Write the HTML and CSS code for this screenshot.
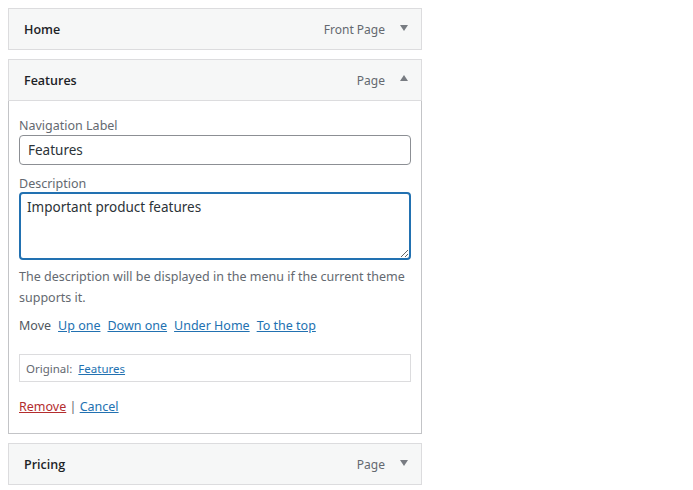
FILE: index.html
```html
<!DOCTYPE html>
<html lang="en">
<head>
    <meta charset="UTF-8">
    <meta name="viewport" content="width=device-width, initial-scale=1.0">
    <title>Menu structure</title>
    <link rel="stylesheet" href="styles.css">
</head>
<body>
<ul class="menu">
    <li class="menu-item">
        <div class="item-handle">
            <span class="item-title">Home</span>
            <span class="item-controls">
                <span class="item-type">Front Page</span>
                <span class="item-toggle down"></span>
            </span>
        </div>
    </li>
    <li class="menu-item active">
        <div class="item-handle">
            <span class="item-title">Features</span>
            <span class="item-controls">
                <span class="item-type">Page</span>
                <span class="item-toggle up"></span>
            </span>
        </div>
        <div class="item-settings">
            <label class="field-label" for="edit-title">Navigation Label</label>
            <input type="text" id="edit-title" class="field-input" value="Features">

            <label class="field-label desc-label" for="edit-desc">Description</label>
            <textarea id="edit-desc" class="field-textarea">Important product features</textarea>
            <p class="description">The description will be displayed in the menu if the current theme supports it.</p>

            <div class="move-links">
                <span class="move-text">Move</span>
                <a href="#">Up one</a>
                <a href="#">Down one</a>
                <a href="#">Under Home</a>
                <a href="#">To the top</a>
            </div>

            <div class="original">
                Original: <a href="#">Features</a>
            </div>

            <div class="actions">
                <a href="#" class="remove">Remove</a> <span class="sep">|</span> <a href="#">Cancel</a>
            </div>
        </div>
    </li>
    <li class="menu-item">
        <div class="item-handle">
            <span class="item-title">Pricing</span>
            <span class="item-controls">
                <span class="item-type">Page</span>
                <span class="item-toggle down"></span>
            </span>
        </div>
    </li>
</ul>
</body>
</html>
```

FILE: styles.css
```css
body {
    margin: 8px;
    background-color: #ffffff;
    font-family: "Noto Sans", "Open Sans", sans-serif;
    font-size: 13px;
    color: #3c434a;
}

.menu {
    list-style: none;
    margin: 0;
    padding: 0;
    width: 414px;
    display: flex;
    flex-direction: column;
    gap: 9px;
}

.item-handle {
    height: 40px;
    border: 1px solid #dcdcde;
    background-color: #f6f7f7;
    display: flex;
    align-items: center;
    justify-content: space-between;
    padding: 0 13px 0 15px;
}

.item-title {
    font-family: "Open Sans", "Noto Sans", sans-serif;
    font-size: 12.5px;
    font-weight: 600;
    color: #1d2327;
}

.item-controls {
    display: flex;
    align-items: center;
    gap: 15px;
}

.item-type {
    font-size: 12px;
    color: #646970;
}

.item-toggle {
    width: 0;
    height: 0;
    border-left: 4px solid transparent;
    border-right: 4px solid transparent;
}

.item-toggle.down {
    border-top: 6px solid #787c82;
    margin-top: -2px;
}

.item-toggle.up {
    border-bottom: 6px solid #787c82;
    margin-top: -4px;
}

.item-settings {
    border: 1px solid #c3c4c7;
    border-top: none;
    padding: 16px 10px 16px;
}

.field-label {
    display: block;
    font-size: 12.5px;
    line-height: 18px;
    color: #646970;
}

.desc-label {
    margin-top: 10px;
    margin-bottom: -1px;
}

.field-input,
.field-textarea {
    display: block;
    width: 100%;
    box-sizing: border-box;
    font-family: "Noto Sans", "Open Sans", sans-serif;
    font-size: 13.5px;
    color: #2c3338;
    background-color: #ffffff;
    margin: 0;
}

.field-input {
    height: 30px;
    border: 1px solid #8c8f94;
    border-radius: 4px;
    padding: 0 8px;
}

.field-textarea {
    height: 68px;
    border: 2px solid #2271b1;
    border-radius: 4px;
    padding: 1px 6px 0;
    line-height: 24px;
    resize: vertical;
    outline: none;
}

.description {
    margin: 6px 0 0;
    font-size: 12.5px;
    line-height: 21px;
    color: #646970;
}

.move-links {
    margin-top: 7px;
    line-height: 21px;
    font-size: 12.5px;
    display: flex;
    gap: 7px;
    color: #50575e;
}

a {
    color: #2271b1;
}

.original {
    margin-top: 18px;
    height: 26px;
    border: 1px solid #dcdcde;
    padding: 0 6px;
    display: flex;
    align-items: center;
    gap: 6px;
    font-size: 11.5px;
    color: #646970;
}

.actions {
    margin-top: 15px;
    line-height: 20px;
    font-size: 12.5px;
    color: #646970;
}

.actions .remove {
    color: #b32d2e;
}
```
